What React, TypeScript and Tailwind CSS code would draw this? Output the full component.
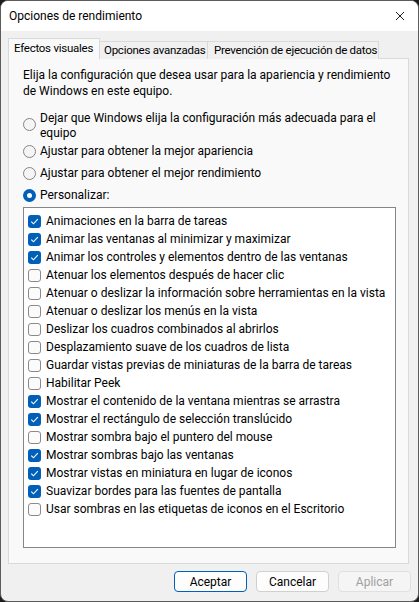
import React from "react";

const items: [string, boolean][] = [
  ["Animaciones en la barra de tareas", true],
  ["Animar las ventanas al minimizar y maximizar", true],
  ["Animar los controles y elementos dentro de las ventanas", true],
  ["Atenuar los elementos después de hacer clic", false],
  ["Atenuar o deslizar la información sobre herramientas en la vista", false],
  ["Atenuar o deslizar los menús en la vista", false],
  ["Deslizar los cuadros combinados al abrirlos", false],
  ["Desplazamiento suave de los cuadros de lista", false],
  ["Guardar vistas previas de miniaturas de la barra de tareas", false],
  ["Habilitar Peek", false],
  ["Mostrar el contenido de la ventana mientras se arrastra", true],
  ["Mostrar el rectángulo de selección translúcido", true],
  ["Mostrar sombra bajo el puntero del mouse", false],
  ["Mostrar sombras bajo las ventanas", true],
  ["Mostrar vistas en miniatura en lugar de iconos", true],
  ["Suavizar bordes para las fuentes de pantalla", true],
  ["Usar sombras en las etiquetas de iconos en el Escritorio", false],
];

function Radio({ checked }: { checked?: boolean }) {
  return checked ? (
    <span className="w-[13px] h-[13px] rounded-full bg-[#005fb8] flex items-center justify-center shrink-0">
      <span className="w-[5px] h-[5px] rounded-full bg-white" />
    </span>
  ) : (
    <span className="w-[13px] h-[13px] rounded-full border border-[#858585] bg-[#f5f5f5] shrink-0" />
  );
}

function Check({ checked }: { checked: boolean }) {
  return checked ? (
    <span className="w-[13px] h-[13px] rounded-[3px] bg-[#005fb8] flex items-center justify-center shrink-0">
      <svg width="9" height="9" viewBox="0 0 9 9">
        <path d="M1.3 4.7 L3.5 6.8 L7.8 2.2" fill="none" stroke="white" strokeWidth="1.1" />
      </svg>
    </span>
  ) : (
    <span className="w-[13px] h-[13px] rounded-[3px] border border-[#8a8a8a] bg-[#fbfbfb] shrink-0" />
  );
}

export default function App() {
  return (
    <div
      className="w-[419px] h-[602px] bg-[#1c1c1c] text-[12px] text-black"
      style={{ fontFamily: 'Roboto, "Liberation Sans", sans-serif' }}
    >
      <div className="w-full h-full rounded-[8px] border border-[#5c5c5c] bg-[#f0f0f0] overflow-hidden flex flex-col">
        <div className="h-[30px] bg-white flex items-center justify-between pl-[8px] pr-[13px] shrink-0">
          <span className="leading-[16px]">Opciones de rendimiento</span>
          <svg width="10" height="10" viewBox="0 0 10 10">
            <path d="M1 1 L9 9 M9 1 L1 9" stroke="#1a1a1a" strokeWidth="1" />
          </svg>
        </div>
        <div className="flex flex-col px-[7px] pt-[7px]">
          <div className="flex items-end h-[21px] relative z-10 whitespace-nowrap text-[11.5px] tracking-[-0.25px]">
            <div className="h-[21px] w-[92px] border border-b-0 border-[#d9d9d9] bg-[#f9f9f9] pl-[5px] pt-[1px] leading-[17px]">
              Efectos visuales
            </div>
            <div className="h-[18px] w-[108px] border border-l-0 border-b-0 border-[#d9d9d9] bg-[#f0f0f0] pl-[4px] leading-[17px]">
              Opciones avanzadas
            </div>
            <div className="h-[18px] w-[171px] border border-l-0 border-b-0 border-[#d9d9d9] bg-[#f0f0f0] pl-[6px] leading-[17px]">
              Prevención de ejecución de datos
            </div>
          </div>
          <div className="h-[506px] mr-[2px] -mt-px border border-[#d9d9d9] bg-[#f9f9f9] flex flex-col pl-[14px] pr-[12px] pt-[8px]">
            <p className="leading-[16px] h-[32px]">
              Elija la configuración que desea usar para la apariencia y rendimiento de Windows en este equipo.
            </p>
            <div className="flex items-center gap-[4px] mt-[10px] h-[30px]">
              <Radio />
              <span className="leading-[15px] pt-[3px]">
                Dejar que Windows elija la configuración más adecuada para el equipo
              </span>
            </div>
            <div className="flex items-center gap-[4px] mt-[1px] h-[22px]">
              <Radio />
              <span>Ajustar para obtener la mejor apariencia</span>
            </div>
            <div className="flex items-center gap-[4px] h-[22px]">
              <Radio />
              <span>Ajustar para obtener el mejor rendimiento</span>
            </div>
            <div className="flex items-center gap-[4px] h-[22px]">
              <Radio checked />
              <span>Personalizar:</span>
            </div>
            <div className="mt-[1px] h-[341px] border border-[#868686] bg-white pl-[4px] pt-[4px] flex flex-col">
              {items.map(([label, c]) => (
                <div key={label} className="flex items-center gap-[5px] h-[18px] shrink-0">
                  <Check checked={c} />
                  <span className="whitespace-nowrap leading-[16px]">{label}</span>
                </div>
              ))}
            </div>
          </div>
        </div>
        <div className="flex justify-end gap-[9px] pr-[7px] pt-[7px]">
          <button className="w-[73px] h-[21px] rounded-[4px] border border-[#005fb8] bg-[#fdfdfd] leading-[18px]">
            Aceptar
          </button>
          <button className="w-[73px] h-[21px] rounded-[4px] border border-[#d0d0d0] bg-[#fdfdfd] leading-[18px]">
            Cancelar
          </button>
          <button className="w-[73px] h-[21px] rounded-[4px] border border-[#e0e0e0] bg-[#f5f5f5] text-[#a0a0a0] leading-[18px]">
            Aplicar
          </button>
        </div>
      </div>
    </div>
  );
}
